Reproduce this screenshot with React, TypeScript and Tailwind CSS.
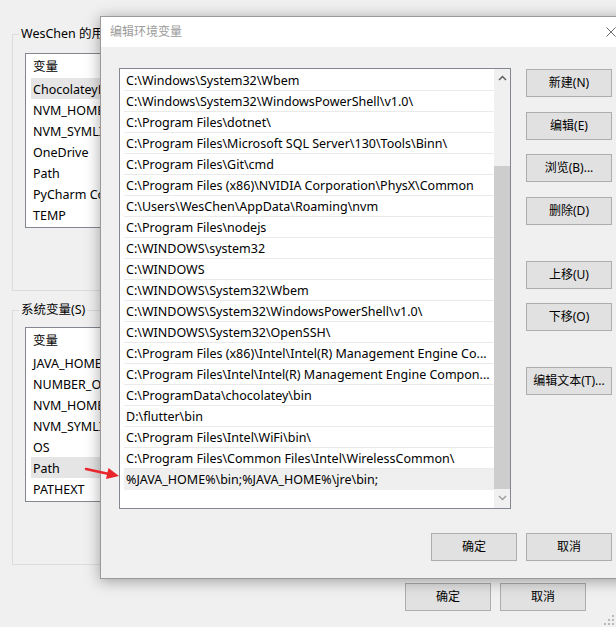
import React from 'react'

const userVars = ['ChocolateyLastPathUpdate', 'NVM_HOME', 'NVM_SYMLINK', 'OneDrive', 'Path', 'PyCharm Community Edition', 'TEMP']
const sysVars = ['JAVA_HOME', 'NUMBER_OF_PROCESSORS', 'NVM_HOME', 'NVM_SYMLINK', 'OS', 'Path', 'PATHEXT']

const paths = [
  'C:\\Windows\\System32\\Wbem',
  'C:\\Windows\\System32\\WindowsPowerShell\\v1.0\\',
  'C:\\Program Files\\dotnet\\',
  'C:\\Program Files\\Microsoft SQL Server\\130\\Tools\\Binn\\',
  'C:\\Program Files\\Git\\cmd',
  'C:\\Program Files (x86)\\NVIDIA Corporation\\PhysX\\Common',
  'C:\\Users\\WesChen\\AppData\\Roaming\\nvm',
  'C:\\Program Files\\nodejs',
  'C:\\WINDOWS\\system32',
  'C:\\WINDOWS',
  'C:\\WINDOWS\\System32\\Wbem',
  'C:\\WINDOWS\\System32\\WindowsPowerShell\\v1.0\\',
  'C:\\WINDOWS\\System32\\OpenSSH\\',
  'C:\\Program Files (x86)\\Intel\\Intel(R) Management Engine Co...',
  'C:\\Program Files\\Intel\\Intel(R) Management Engine Compon...',
  'C:\\ProgramData\\chocolatey\\bin',
  'D:\\flutter\\bin',
  'C:\\Program Files\\Intel\\WiFi\\bin\\',
  'C:\\Program Files\\Common Files\\Intel\\WirelessCommon\\',
  '%JAVA_HOME%\\bin;%JAVA_HOME%\\jre\\bin;',
]

function WinButton({ label, className = '' }: { label: string; className?: string }) {
  return (
    <button
      type="button"
      className={`w-[86px] h-[28px] shrink-0 bg-[#e1e1e1] border border-[#adadad] text-[12px] text-black flex items-center justify-center ${className}`}
    >
      {label}
    </button>
  )
}

function VarList({ items, active, mt }: { items: string[]; active: string; mt: string }) {
  return (
    <div className={`ml-[12px] ${mt} w-[560px] bg-white border border-[#828790] pb-[2px]`}>
      <div className="h-[24px] pt-[2px] flex items-center pl-[7px] text-[12.5px]">变量</div>
      {items.map((v) => (
        <div
          key={v}
          className={`h-[21px] ml-[5px] pl-[2px] pt-[3px] flex items-center text-[12.5px] whitespace-nowrap ${v === active ? 'bg-[#e5e5e5]' : ''}`}
        >
          {v}
        </div>
      ))}
    </div>
  )
}

export default function App() {
  return (
    <div className="relative w-[616px] h-[627px] overflow-hidden bg-[#f0f0f0] text-black font-['Noto_Sans','Noto_Sans_CJK_SC',sans-serif]">
      {/* back window: 环境变量 */}
      <div className="pl-[12px] pt-[34px]">
        <div className="relative w-[590px] h-[257px] border border-[#dcdcdc]">
          <span className="absolute left-[6px] top-[-10px] px-[2px] bg-[#f0f0f0] text-[12.5px] leading-[18px] whitespace-nowrap">
            WesChen 的用户变量(U)
          </span>
          <VarList items={userVars} active="ChocolateyLastPathUpdate" mt="mt-[18px]" />
        </div>
        <div className="relative mt-[19px] w-[590px] h-[255px] border border-[#dcdcdc]">
          <span className="absolute left-[6px] top-[-10px] px-[2px] bg-[#f0f0f0] text-[12.5px] leading-[18px] whitespace-nowrap">
            系统变量(S)
          </span>
          <VarList items={sysVars} active="Path" mt="mt-[16px]" />
        </div>
        <div className="flex justify-end gap-[9px] pr-[30px] mt-[18px]">
          <WinButton label="确定" className="h-[27px]" />
          <WinButton label="取消" className="h-[27px]" />
        </div>
      </div>

      {/* resize grip */}
      <svg className="absolute right-[2px] bottom-[2px]" width="10" height="10" viewBox="0 0 10 10">
        {[
          [8, 0],
          [4, 4],
          [8, 4],
          [0, 8],
          [4, 8],
          [8, 8],
        ].map(([x, y]) => (
          <rect key={`${x}-${y}`} x={x} y={y} width="2" height="2" fill="#b8b8b8" />
        ))}
      </svg>

      {/* front dialog: 编辑环境变量 */}
      <div className="absolute left-[100px] top-[16px] w-[531px] h-[563px] border border-[#9a9a9a] bg-[#f0f0f0] shadow-[0_2px_14px_rgba(0,0,0,0.35)] flex flex-col">
        <div className="h-[30px] bg-white flex items-center justify-between pl-[9px] pr-[14px]">
          <span className="text-[12px] text-[#9b9b9b]">编辑环境变量</span>
          <svg width="10" height="10" viewBox="0 0 10 10">
            <path d="M0.5 0.5 L9.5 9.5 M9.5 0.5 L0.5 9.5" stroke="#6d6d6d" strokeWidth="1" />
          </svg>
        </div>

        <div className="flex pl-[18px] pt-[21px] gap-[15px]">
          <div className="w-[392px] h-[441px] bg-white border border-[#828790] flex">
            <div className="flex-1 pt-[1px] overflow-hidden">
              {paths.map((p, i) => (
                <div
                  key={p}
                  className={`h-[21px] ml-[4px] pl-[2px] pt-[2px] flex items-center text-[12.5px] whitespace-nowrap overflow-hidden ${
                    i === paths.length - 1 ? 'bg-[#efefef]' : 'border-b border-[#eaeaea]'
                  }`}
                >
                  {p}
                </div>
              ))}
            </div>
            <div className="w-[16px] bg-[#f0f0f0] flex flex-col items-center">
              <div className="h-[17px] flex items-center justify-center">
                <svg width="9" height="6" viewBox="0 0 9 6">
                  <path d="M1 5 L4.5 1.5 L8 5" fill="none" stroke="#606060" strokeWidth="1.5" />
                </svg>
              </div>
              <div className="mt-[80px] w-full h-[323px] bg-[#cdcdcd]" />
              <div className="h-[17px] flex items-center justify-center">
                <svg width="9" height="6" viewBox="0 0 9 6">
                  <path d="M1 1 L4.5 4.5 L8 1" fill="none" stroke="#a0a0a0" strokeWidth="1.5" />
                </svg>
              </div>
            </div>
          </div>

          <div className="flex flex-col">
            <WinButton label="新建(N)" className="mt-[1px]" />
            <WinButton label="编辑(E)" className="mt-[15px]" />
            <WinButton label="浏览(B)..." className="mt-[14px]" />
            <WinButton label="删除(D)" className="mt-[15px]" />
            <WinButton label="上移(U)" className="mt-[36px]" />
            <WinButton label="下移(O)" className="mt-[14px]" />
            <WinButton label="编辑文本(T)..." className="mt-[36px]" />
          </div>
        </div>

        <div className="flex justify-end gap-[9px] pr-[18px] mt-[24px]">
          <WinButton label="确定" />
          <WinButton label="取消" />
        </div>
      </div>

      {/* red arrow, drawn over the dialog edge */}
      <svg className="absolute left-[80px] top-[460px]" width="45" height="25" viewBox="0 0 45 25">
        <line x1="6" y1="9" x2="29" y2="14" stroke="#e8262b" strokeWidth="2.5" strokeLinecap="round" />
        <polygon points="39,16 26,19 28.5,8" fill="#e8262b" />
      </svg>
    </div>
  )
}
